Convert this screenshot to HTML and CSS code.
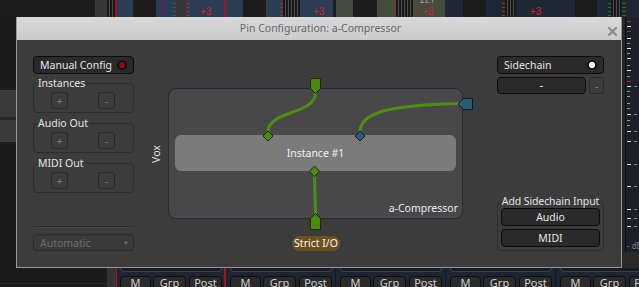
FILE: index.html
```html
<!DOCTYPE html>
<html lang="en">
<head>
<meta charset="utf-8">
<title>Pin Configuration: a-Compressor</title>
<link rel="stylesheet" href="styles.css">
</head>
<body>
<div class="screen">
  <div class="top">
    <span class="seg dk w95"></span><span class="seg gr w12"></span><span class="seg st w8"></span><span class="seg rd w2"></span><span class="seg bl w16"></span><span class="seg dk w23"></span><span class="seg bl w16"></span><span class="seg bl tk w4"></span><span class="seg gr w10"></span><span class="seg bl tk w4"></span><span class="seg bl w34 lvl p10">+3</span><span class="seg rd w2"></span><span class="seg bl w17"></span><span class="seg dk w23"></span><span class="seg bl w14"></span><span class="seg bl tk w3"></span><span class="seg st w17"></span><span class="seg bl w33 lvl p13">+3</span><span class="seg dk w3"></span><span class="seg ol w17"></span><span class="seg dk w24"></span><span class="seg ol w16"></span><span class="seg ol tk w3"></span><span class="seg st w17"></span><span class="seg ol w32 lvl2"><span class="gain">127</span><span class="plus">+3</span></span><span class="seg bd w18"></span><span class="seg dk w23"></span><span class="seg bd w16"></span><span class="seg bd tk w3"></span><span class="seg st w11"></span><span class="seg bd w39 lvl p14">+3</span><span class="seg bd w20"></span><span class="seg dk w22"></span><span class="seg bd w11"></span><span class="seg bd tk w3"></span><span class="seg st w11"></span><span class="seg bd tk w17"></span>
  </div>

  <div class="lstrip"><div class="ls-a"></div><div class="ls-b"></div><div class="ls-c"></div><div class="ls-d"></div></div>

  <div class="dialog">
    <div class="titlebar">
      <span class="title">Pin Configuration: a-Compressor</span>
      <svg class="close" width="9" height="9" viewBox="0 0 9 9"><path d="M1 1L8 8M8 1L1 8" stroke="#8a8a8a" stroke-width="2.2" stroke-linecap="square"/></svg>
    </div>
    <div class="body">
      <div class="lcol">
        <div class="btn toggle"><span>Manual Config</span><span class="led red"></span></div>
        <fieldset class="grp"><legend>Instances</legend><div class="pm"><span class="sbtn">+</span><span class="sbtn">-</span></div></fieldset>
        <fieldset class="grp"><legend>Audio Out</legend><div class="pm"><span class="sbtn">+</span><span class="sbtn">-</span></div></fieldset>
        <fieldset class="grp"><legend>MIDI Out</legend><div class="pm"><span class="sbtn">+</span><span class="sbtn">-</span></div></fieldset>
        <div class="sep"></div>
        <div class="combo"><span>Automatic</span><span class="arrow">▼</span></div>
      </div>

      <div class="canvas">
        <div class="vox">Vox</div>
        <div class="plugin">
          <div class="inst">Instance #1</div>
          <div class="pname">a-Compressor</div>
        </div>
        <svg class="wires" width="363" height="195" viewBox="0 0 363 195">
          <g fill="none" stroke="#4f8e12" stroke-width="3" stroke-linecap="round">
            <path d="M181.5,37 C181.5,59 134,54 134,76"/>
            <path d="M324,47.5 C266,49 226,54 226,76"/>
            <path d="M180.5,119 L181.5,158"/>
          </g>
          <g stroke="#1b2a0a" stroke-width="1" fill="#4c8a0e">
            <polygon points="176.5,22.5 186.5,22.5 186.5,32.5 181.5,37.5 176.5,32.5"/>
            <polygon points="134,75 139,80 134,85 129,80"/>
            <polygon points="180.5,110 185.5,115.3 180.5,120.6 175.5,115.3"/>
            <polygon points="181.5,157.5 186.5,162.5 186.5,173.5 176.5,173.5 176.5,162.5"/>
          </g>
          <g stroke="#0f1b26" stroke-width="1" fill="#2e5a7a">
            <polygon points="324,48 329.5,42.5 338.5,42.5 338.5,53.5 329.5,53.5"/>
            <polygon points="226,75 231,80 226,85 221,80"/>
          </g>
        </svg>
        <div class="strict">Strict I/O</div>
      </div>

      <div class="rcol">
        <div class="btn toggle"><span>Sidechain</span><span class="led white"></span></div>
        <div class="scrow"><div class="btn combo2">-</div><div class="sbtn sq">-</div></div>
        <fieldset class="grp add"><legend>Add Sidechain Input</legend>
          <div class="addbtns"><div class="btn wide">Audio</div><div class="btn wide">MIDI</div></div>
        </fieldset>
      </div>
    </div>
  </div>

  <div class="meter">
    <svg width="17" height="251" viewBox="0 0 17 251">
      <rect width="17" height="251" fill="#1c2029"/>
      <rect x="0" y="0" width="3" height="251" fill="#262626"/>
      <rect x="3" y="0" width="1" height="251" fill="#0d0d0d"/>
      <rect x="0" y="235" width="17" height="16" fill="#2a2a2a"/>
      <path d="M5 4.5h4M5 14.5h4M5 64.5h4" stroke="#d41c1c" stroke-width="1"/>
      <path d="M5 9.5h4M5 21.5h4M5 31.5h4M5 41.5h4M5 53.5h4M5 69.5h4M5 97.5h4M5 114.5h4M5 124.5h4M5 147.5h4M5 169.5h4M5 192.5h4M5 201.5h4M5 209.5h4" stroke="#e6e6e6" stroke-width="1"/>
      <path d="M5 26.5h3M5 36.5h3M5 48.5h3M5 59.5h3M5 74.5h3M5 79.5h3M5 86.5h3M5 91.5h3M5 103.5h3M5 108.5h3" stroke="#9a9a9a" stroke-width="1"/>
      <path d="M12 69.5h3M12 97.5h3M12 114.5h3M12 124.5h3M12 147.5h3M12 169.5h3M12 192.5h3M12 201.5h3M12 209.5h3" stroke="#8a8a8a" stroke-width="1"/>
      <text x="5" y="232" font-family="Noto Sans, sans-serif" font-size="8" fill="#7d7d7d">- dB</text>
    </svg>
  </div>

  <div class="bottom">
    <div class="b-dk"></div>
    <div class="b-gr"></div>
    <div class="strip sel"><div class="cap"></div><div class="mbtns"><span class="mb m">M</span><span class="mb g">Grp</span><span class="mb p">Post</span></div></div>
    <div class="strip"><div class="cap"></div><div class="mbtns"><span class="mb m">M</span><span class="mb g">Grp</span><span class="mb p">Post</span></div></div>
    <div class="strip"><div class="cap"></div><div class="mbtns"><span class="mb m">M</span><span class="mb g">Grp</span><span class="mb p">Post</span></div></div>
    <div class="strip"><div class="cap"></div><div class="mbtns"><span class="mb m">M</span><span class="mb g">Grp</span><span class="mb p">Post</span></div></div>
    <div class="strip"><div class="cap"></div><div class="mbtns"><span class="mb m">M</span><span class="mb g">Grp</span><span class="mb p">Post</span></div></div>
  </div>
</div>
</body>
</html>
```

FILE: styles.css
```css
* { box-sizing: border-box; }
html, body { margin: 0; padding: 0; }
body {
  width: 639px; height: 287px; overflow: hidden;
  background: #1b1b1b;
  font-family: "Noto Sans", "Liberation Sans", sans-serif;
  font-size: 10.5px;
  color: #e2e2e2;
}
.screen {
  display: grid;
  grid-template-columns: 16px 606px 17px;
  grid-template-rows: 17px 251px 19px;
  width: 639px; height: 287px;
}

/* top mixer strip background */
.top { grid-column: 1 / 4; grid-row: 1; display: flex; overflow: hidden; height: 17px; }
.seg { flex: none; height: 17px; display: block; }
.dk { background: #1c1c1c; }
.gr { background: #363636; }
.st { background: repeating-linear-gradient(to right, #1a1a1a 0 2px, #4a4a4a 2px 3px); }
.rd { background: #a81414; }
.bl { background: #2c3c55; }
.bd { background: #212835; }
.ol { background: #464c3d; }
.tk { background-image: repeating-linear-gradient(to bottom, transparent 0 3px, #c81c1c 3px 4px); background-size: 4px 100%; background-repeat: no-repeat; }
.lvl { display: flex; align-items: flex-end; color: #d42020; font-family: "Liberation Sans", sans-serif; font-size: 10px; line-height: 10px; }
.p10 { padding-left: 10px; } .p13 { padding-left: 13px; } .p14 { padding-left: 14px; }
.lvl2 { display: flex; flex-direction: column; justify-content: space-between; padding-left: 6px; font-family: "Liberation Sans", sans-serif; font-size: 10px; line-height: 10px; }
.gain { color: #9a9a9a; margin-top: -5px; }
.plus { color: #d42020; margin-left: 3px; }
.w2{width:2px}.w3{width:3px}.w4{width:4px}.w8{width:8px}.w10{width:10px}.w11{width:11px}.w12{width:12px}.w14{width:14px}.w16{width:16px}.w17{width:17px}.w18{width:18px}.w20{width:20px}.w22{width:22px}.w23{width:23px}.w24{width:24px}.w32{width:32px}.w33{width:33px}.w34{width:34px}.w39{width:39px}.w95{width:95px}

/* left background strip */
.lstrip { grid-column: 1; grid-row: 2; background: #1b1b1b; display: flex; flex-direction: column; }
.ls-a { height: 73px; }
.ls-b { height: 27px; background: #3a3a3a; }
.ls-c { height: 3px; background: #282828; }
.ls-d { height: 22px; background: #3a3a3a; }

/* dialog */
.dialog {
  grid-column: 2; grid-row: 2;
  display: flex; flex-direction: column;
  background: #3c3c3c;
  border: 1px solid #979797; border-top: 0;
}
.titlebar {
  height: 23px; flex: none;
  display: flex; align-items: center;
  padding: 0 4px 0 20px;
  background: linear-gradient(#d9d9d9, #cbcbcb);
}
.title { flex: 1; text-align: center; color: #676767; line-height: 14px; padding-bottom: 2px; }
.close { flex: none; margin-left: 4px; align-self: flex-end; margin-bottom: 4px; }
.body {
  flex: 1;
  display: grid;
  grid-template-columns: 101px 1fr 107px;
  padding: 16px 17px 16px 16px;
}

.btn {
  height: 18px;
  border: 1px solid #0c0c0c; border-radius: 4px;
  background: #2a2a2a; color: #e6e6e6;
  line-height: 16px;
}
.toggle { display: flex; align-items: center; justify-content: space-between; padding: 0 6px 0 6px; }
.led { width: 10px; height: 10px; border-radius: 50%; flex: none; }
.led.red { background: radial-gradient(circle, #8c0d0d 0 2.6px, #101010 3.4px); }
.led.white { background: radial-gradient(circle, #ffffff 0 2.8px, #0c0c0c 3.6px); }

.lcol, .rcol { display: flex; flex-direction: column; min-width: 0; }
.grp {
  margin: 2px 0 0; padding: 2px 0 3px;
  border: 1px solid #2d2d2d; border-radius: 4px; min-width: 0;
}
.grp + .grp { margin-top: 3px; }
.grp legend { padding: 0 1px; margin-left: 3px; line-height: 14px; color: #e4e4e4; white-space: nowrap; }
.pm { display: flex; gap: 30px; padding-left: 17px; }
.sbtn {
  width: 17px; height: 17px;
  border: 1px solid #292929; border-radius: 3px;
  background: #3c3c3c; color: #808080;
  display: flex; align-items: center; justify-content: center;
  font-size: 10px; line-height: 1;
}
.sep { margin-top: auto; height: 2px; border-top: 1px solid #2c2c2c; border-bottom: 1px solid #474747; margin-bottom: 6px; }
.combo {
  height: 17px; display: flex; align-items: center; justify-content: space-between;
  padding: 0 4px 0 6px;
  border: 1px solid #2b2b2b; border-radius: 4px;
  background: #3a3a3a; color: #6e6e6e;
}
.arrow { font-size: 6px; color: #6a6a6a; }

.scrow { display: flex; gap: 3px; margin-top: 3px; height: 17px; }
.combo2 { flex: 1; height: 17px; text-align: center; line-height: 15px; color: #fff; }
.sq { width: 15px; flex: none; }
.add { margin-top: auto; padding: 0 3px 3px; }
.add legend { margin: 0 auto; padding: 0; letter-spacing: -0.1px; }
.addbtns { display: flex; flex-direction: column; gap: 3px; }
.wide { text-align: center; }

/* routing diagram */
.canvas { position: relative; }
.vox { position: absolute; left: 22px; top: 98px; transform: translate(-50%, -50%) rotate(-90deg); line-height: 14px; color: #e4e4e4; }
.plugin {
  position: absolute; left: 34px; top: 32px; width: 295px; height: 131px;
  display: flex; flex-direction: column;
  padding: 46px 6px 3px;
  background: #484848;
  border: 1px solid #2a293c; border-radius: 8px;
}
.inst { height: 36px; flex: none; border-radius: 6px; background: #7b7b7b; display: flex; align-items: center; justify-content: center; color: #f2f2f2; }
.pname { margin-top: auto; text-align: right; line-height: 14px; margin-right: -2px; color: #ececec; }
.wires { position: absolute; left: 0; top: 0; overflow: visible; }
.strict {
  position: absolute; left: 158px; top: 180px; width: 48px; height: 15px;
  border-radius: 8px; background: #6a5321; color: #f4f4f4;
  text-align: center; line-height: 15px;
}

/* right meter */
.meter { grid-column: 3; grid-row: 2; background: #1c2029; }
.meter svg { display: block; }

/* bottom strip */
.bottom { grid-column: 1 / 4; grid-row: 3; display: flex; overflow: hidden; background: #1f2431; }
.b-dk { flex: none; width: 107px; background: linear-gradient(to bottom, #1b1b1b 0 15px, #2d2d2d 15px 16px, #1b1b1b 16px); }
.b-gr { flex: none; width: 9px; background: #333333; }
.strip { flex: none; width: 110px; padding-left: 4px; display: flex; flex-direction: column; background: #1f2431; border-right: 1px solid #15181f; }
.strip.sel { border-left: 1px solid #a81414; border-right: 2px solid #a81414; padding-left: 3px; }
.cap { width: 102px; height: 4px; flex: none; border: 1px solid #3a4150; border-top: 0; border-radius: 0 0 4px 4px; background: #171a21; margin-bottom: 4px; }
.mbtns { display: flex; }
.mb {
  flex: none; height: 16px;
  border: 1px solid #0e0e0e; border-radius: 4px;
  background: #2b2b2b; color: #cfcfcf;
  font-size: 11px; line-height: 10px; text-align: center; padding-top: 1px;
}
.mb.m { width: 31px; }
.mb.g { width: 33px; margin-left: 2px; }
.mb.p { width: 33px; margin-left: 3px; }
```
